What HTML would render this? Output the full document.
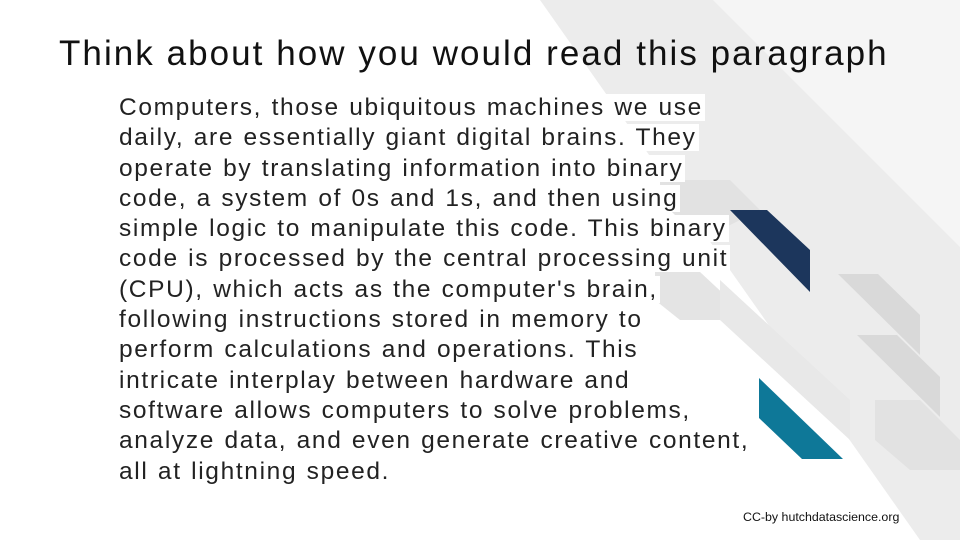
<!DOCTYPE html>
<html><head><meta charset="utf-8"><style>
html,body{margin:0;padding:0}
body{width:960px;height:540px;position:relative;overflow:hidden;background:#fff;font-family:"Liberation Sans",sans-serif}
svg{position:absolute;left:0;top:0}
h1{position:absolute;left:59px;top:34px;margin:0;font-weight:normal;font-size:35px;letter-spacing:2.05px;color:#111;white-space:nowrap}
.body{position:absolute;left:119px;top:93px;font-size:24.5px;line-height:30.3px;color:#222;letter-spacing:1.65px;word-spacing:1px}
.body div{white-space:nowrap}
.body span{background:#fff;padding-right:2px}
.foot{position:absolute;left:743px;top:510px;font-size:12.4px;color:#111}
</style></head><body>
<svg width="960" height="540" viewBox="0 0 960 540">
<polygon points="540,0 960,0 960,540 920,540" fill="#ececec"/>
<polygon points="713,0 960,0 960,247" fill="#f5f5f5"/>
<polygon points="660,180 730,180 760,210 700,240 660,200" fill="#e2e2e2"/>
<polygon points="655,272 700,272 730,300 720,320 680,320 655,300" fill="#e4e4e4"/>
<polygon points="720,280 850,400 850,440 720,320" fill="#e8e8e8"/>
<polygon points="838,274 878,274 920,315 920,355" fill="#d9d9d9"/>
<polygon points="857,335 897,335 940,377 940,417" fill="#d9d9d9"/>
<polygon points="875,400 920,400 960,440 960,470 910,470 875,440" fill="#e2e2e2"/>
<polygon points="730,210 767,210 810,250 810,292" fill="#1c365c"/>
<polygon points="759,378 759,418 802,459 843,459" fill="#0e7898"/>
</svg>
<h1>Think about how you would read this paragraph</h1>
<div class="body">
<div><span>Computers, those ubiquitous machines we use</span></div>
<div><span>daily, are essentially giant digital brains. They</span></div>
<div><span>operate by translating information into binary</span></div>
<div><span>code, a system of 0s and 1s, and then using</span></div>
<div><span>simple logic to manipulate this code. This binary</span></div>
<div><span>code is processed by the central processing unit</span></div>
<div><span>(CPU), which acts as the computer's brain,</span></div>
<div><span>following instructions stored in memory to</span></div>
<div><span>perform calculations and operations. This</span></div>
<div><span>intricate interplay between hardware and</span></div>
<div><span>software allows computers to solve problems,</span></div>
<div><span>analyze data, and even generate creative content,</span></div>
<div><span>all at lightning speed.</span></div>
</div>
<div class="foot">CC-by hutchdatascience.org</div>
</body></html>
